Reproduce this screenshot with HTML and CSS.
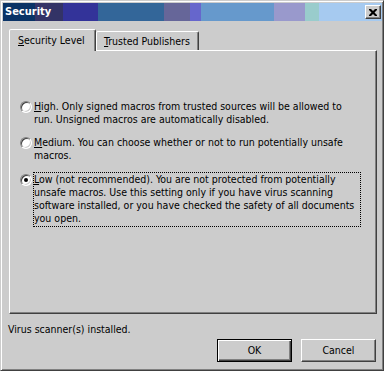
FILE: index.html
```html
<!DOCTYPE html>
<html>
<head>
<meta charset="utf-8">
<link rel="stylesheet" href="styles.css">
</head>
<body>
<div class="window">
  <div class="titlebar">
    <span class="seg s1"></span><span class="seg s2"></span><span class="seg s3"></span><span class="seg s4"></span><span class="seg s5"></span><span class="seg s6"></span><span class="seg s7"></span><span class="seg s8"></span><span class="seg s9"></span><span class="seg s10"></span>
    <span class="title">Security</span>
    <span class="close"><svg width="8" height="7" viewBox="0 0 8 7"><path d="M0 0h2l2 2 2-2h2v1l-2.5 2.5L8 6v1H6L4 5 2 7H0V6l2.5-2.5L0 1z" fill="#000"/></svg></span>
  </div>
  <div class="content">
    <div class="tabs">
      <div class="tab active"><u>S</u>ecurity Level</div>
      <div class="tab"><u>T</u>rusted Publishers</div>
    </div>
    <div class="panel">
      <div class="option high">
        <span class="radio"></span>
        <div class="label"><u>H</u>igh. Only signed macros from trusted sources will be allowed to<br>run. Unsigned macros are automatically disabled.</div>
      </div>
      <div class="option medium">
        <span class="radio"></span>
        <div class="label"><u>M</u>edium. You can choose whether or not to run potentially unsafe<br>macros.</div>
      </div>
      <div class="option low">
        <span class="radio checked"></span>
        <div class="label focus"><u>L</u>ow (not recommended). You are not protected from potentially<br>unsafe macros. Use this setting only if you have virus scanning<br>software installed, or you have checked the safety of all documents<br>you open.</div>
      </div>
    </div>
    <div class="status">Virus scanner(s) installed.</div>
    <div class="buttons">
      <div class="btn default"><span>OK</span></div>
      <div class="btn">Cancel</div>
    </div>
  </div>
</div>
</body>
</html>
```
FILE: styles.css
```css
* { box-sizing: border-box; }
html, body { margin: 0; padding: 0; background: #cccccc; }
body {
  font-family: "DejaVu Sans Condensed", "Liberation Sans", sans-serif;
  font-size: 10.5px;
  color: #000;
}
u { text-decoration: underline; text-underline-offset: 1px; }
.window {
  width: 384px;
  height: 371px;
  border: 1px solid;
  border-color: #cccccc #404040 #404040 #cccccc;
  box-shadow: inset 1px 1px #ffffff, inset -1px -1px #808080;
  padding: 2px 1px 2px 2px;
  display: flex;
  flex-direction: column;
  background: #cccccc;
}
.titlebar {
  position: relative;
  height: 18px;
  display: flex;
  flex-shrink: 0;
}
.seg { height: 18px; display: block; }
.s1 { width: 32px; background: #0a3366; }
.s2 { width: 28px; background: #333366; }
.s3 { width: 35px; background: #333399; }
.s4 { width: 66px; background: #336699; }
.s5 { width: 26px; background: #666699; }
.s6 { width: 11px; background: #6666cc; }
.s7 { width: 73px; background: #6699cc; }
.s8 { width: 31px; background: #9999cc; }
.s9 { width: 14px; background: #99cccc; }
.s10 { flex: 1; background: #a6caf0; }
.title {
  position: absolute;
  left: 2px;
  top: 2px;
  color: #fff;
  font-weight: bold;
  font-size: 11px;
  line-height: 14px;
}
.close {
  position: absolute;
  right: 1px;
  top: 2px;
  width: 16px;
  height: 14px;
  background: #cccccc;
  border: 1px solid;
  border-color: #ffffff #404040 #404040 #ffffff;
  box-shadow: inset -1px -1px #808080;
  display: flex;
  align-items: center;
  justify-content: center;
  padding-right: 1px;
}
.close svg { display: block; }
.content {
  flex: 1;
  padding: 8px 5px 0 6px;
  display: flex;
  flex-direction: column;
}
.tabs {
  display: flex;
  align-items: flex-end;
  height: 21px;
  position: relative;
  z-index: 1;
}
.tab {
  height: 19px;
  padding: 2px 6px 0 7px;
  border: 1px solid;
  border-bottom: none;
  border-color: #ffffff #404040 transparent #ffffff;
  border-radius: 2px 2px 0 0;
  box-shadow: inset -1px 0 #808080;
  line-height: 15px;
  background: #cccccc;
  white-space: nowrap;
}
.tab.active {
  height: 22px;
  margin-bottom: -1px;
  padding: 3px 7px 0 8px;
  width: 87px;
}
.tab + .tab { width: 103px; }
.panel {
  height: 264px;
  border: 1px solid;
  border-color: #ffffff #404040 #404040 #ffffff;
  box-shadow: inset -1px -1px #808080;
  padding: 49px 0 0 10px;
}
.option {
  display: flex;
  align-items: flex-start;
}
.label { line-height: 13px; margin-left: 2px; white-space: nowrap; }
.medium { margin-top: 10px; }
.low { margin-top: 10px; }
.focus {
  border: 1px dotted #000;
  margin-left: 1px;
  padding: 0 6px 1px 0;
}
.radio {
  width: 12px;
  height: 12px;
  border-radius: 50%;
  border: 1px solid;
  border-color: #808080 #ffffff #ffffff #808080;
  box-shadow: inset 1px 1px #404040, inset -1px -1px #cccccc;
  background: #fff;
  margin-top: 1px;
  display: flex;
  align-items: center;
  justify-content: center;
  flex-shrink: 0;
}
.low .radio { margin-top: 2px; }
.radio.checked::after {
  content: "";
  width: 4px;
  height: 4px;
  border-radius: 50%;
  background: #000;
}
.status {
  margin-top: 9px;
  margin-left: -1px;
  line-height: 13px;
}
.buttons {
  display: flex;
  justify-content: flex-end;
  gap: 9px;
  margin-top: 3px;
  padding-right: 1px;
}
.btn {
  width: 75px;
  height: 23px;
  border: 1px solid;
  border-color: #ffffff #404040 #404040 #ffffff;
  box-shadow: inset -1px -1px #808080;
  display: flex;
  align-items: center;
  justify-content: center;
  padding-bottom: 1px;
}
.btn.default {
  border: 1px solid #000;
  box-shadow: inset 1px 1px #ffffff, inset -1px -1px #404040, inset -2px -2px #808080;
}
```
